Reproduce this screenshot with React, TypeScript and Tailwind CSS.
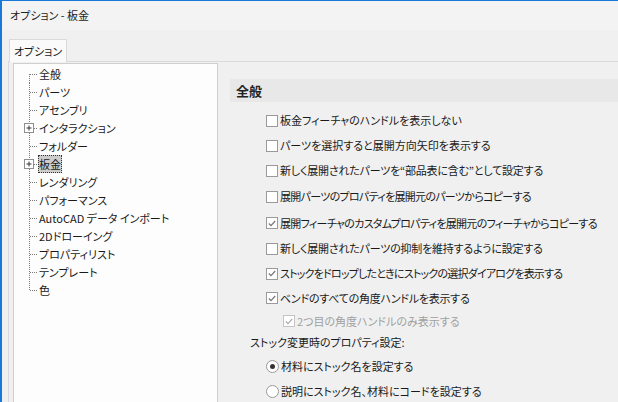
import React from "react";

const treeItems = [
  { label: "全般" },
  { label: "パーツ" },
  { label: "アセンブリ" },
  { label: "インタラクション", plus: true },
  { label: "フォルダー" },
  { label: "板金", plus: true, selected: true },
  { label: "レンダリング" },
  { label: "パフォーマンス" },
  { label: "AutoCAD データ インポート" },
  { label: "2Dドローイング" },
  { label: "プロパティリスト" },
  { label: "テンプレート" },
  { label: "色" },
];

const options = [
  { label: "板金フィーチャのハンドルを表示しない", checked: false, h: "h-[25px]", t: "" },
  { label: "パーツを選択すると展開方向矢印を表示する", checked: false, h: "h-[25px]", t: "" },
  { label: "新しく展開されたパーツを“部品表に含む”として設定する", checked: false, h: "h-[25px]", t: "tracking-[-0.2px]" },
  { label: "展開パーツのプロパティを展開元のパーツからコピーする", checked: false, h: "h-[27px]", t: "tracking-[-0.7px]" },
  { label: "展開フィーチャのカスタムプロパティを展開元のフィーチャからコピーする", checked: true, h: "h-[26px]", t: "tracking-[-0.7px]" },
  { label: "新しく展開されたパーツの抑制を維持するように設定する", checked: false, h: "h-[25px]", t: "tracking-[-0.2px]" },
  { label: "ストックをドロップしたときにストックの選択ダイアログを表示する", checked: true, h: "h-[25px]", t: "tracking-[-0.8px]" },
  { label: "ベンドのすべての角度ハンドルを表示する", checked: true, h: "h-[24px]", t: "tracking-[-0.25px]" },
];

const TreeLines = ({ first, last, plus }: { first?: boolean; last?: boolean; plus?: boolean }) => (
  <svg width="24" height="18" className="shrink-0">
    <line
      x1="15.5"
      x2="15.5"
      y1={first ? 9 : 0}
      y2={last ? 9.5 : 18}
      stroke="#7a7a7a"
      strokeDasharray="1 1"
    />
    <line x1="16" x2="24" y1="9.5" y2="9.5" stroke="#7a7a7a" strokeDasharray="1 1" />
    {plus && (
      <>
        <rect x="10.5" y="4.5" width="9" height="9" fill="#fff" stroke="#8f8f8f" />
        <line x1="12.5" x2="17.5" y1="9" y2="9" stroke="#333" />
        <line x1="15" x2="15" y1="6.5" y2="11.5" stroke="#333" />
      </>
    )}
  </svg>
);

const CheckBox = ({ checked, disabled }: { checked: boolean; disabled?: boolean }) => (
  <span
    className={`flex h-[12px] w-[12px] shrink-0 items-center justify-center border bg-white ${
      disabled ? "border-[#c4c4c4]" : "border-[#9a9a9a]"
    }`}
  >
    {checked && (
      <svg width="8" height="7" viewBox="0 0 8 7">
        <path
          d="M0.8 3.6 L3 5.6 L7.2 1"
          fill="none"
          stroke={disabled ? "#b0b0b0" : "#7a7a7a"}
          strokeWidth="1.3"
        />
      </svg>
    )}
  </span>
);

const Radio = ({ checked }: { checked: boolean }) => (
  <span className="flex h-[13px] w-[13px] shrink-0 items-center justify-center rounded-full border border-[#9a9a9a] bg-white">
    {checked && <span className="h-[5px] w-[5px] rounded-full bg-[#333]" />}
  </span>
);

export default function App() {
  return (
    <div
      className="flex h-[402px] w-[618px] flex-col overflow-hidden border-l-2 border-t border-[#1979d6] bg-[#f0f0f0] text-[11px] text-[#1a1a1a] [font-feature-settings:'palt']"
      style={{ fontFamily: '"Noto Sans CJK JP", "Noto Sans", sans-serif' }}
    >
      <div className="flex h-[29px] shrink-0 items-center bg-[#f3f3f3] pl-[8px] text-[#222]">
        オプション - 板金
      </div>
      <div className="flex h-[9px] shrink-0" />
      <div className="relative z-10 flex h-[23px] shrink-0">
        <div className="ml-[7px] flex w-[58px] items-center justify-center whitespace-nowrap border border-b-0 border-[#d9d9d9] bg-[#fafafa]">
          オプション
        </div>
      </div>
      <div className="-mt-px ml-[6px] flex min-h-0 flex-1 border-l border-t border-[#d9d9d9] bg-[#f0f0f0] pl-[4px] pt-px">
        <div className="flex w-[205px] shrink-0 flex-col border border-b-0 border-[#cfcfcf] bg-[#fdfdfd] pt-[1px]">
          {treeItems.map((it, i) => (
            <div key={it.label} className="flex h-[18px] items-center">
              <TreeLines first={i === 0} last={i === treeItems.length - 1} plus={it.plus} />
              <span
                className={`whitespace-nowrap leading-[16px] ${
                  it.selected ? "border border-dotted border-[#333] bg-[#cccccc]" : "px-px"
                }`}
              >
                {it.label}
              </span>
            </div>
          ))}
        </div>
        <div className="flex min-w-0 flex-1 flex-col pl-[12px] pt-[16px]">
          <div className="flex h-[23px] shrink-0 items-center bg-[#e8e8e8] pl-[6px] text-[13px] font-bold text-[#222]">
            全般
          </div>
          <div className="flex flex-col pt-[6px] pl-[36px]">
            {options.map((o) => (
              <div key={o.label} className={`flex ${o.h} items-center gap-[2px] whitespace-nowrap`}>
                <CheckBox checked={o.checked} />
                <span className={o.t}>{o.label}</span>
              </div>
            ))}
            <div className="flex h-[22px] items-center gap-[2px] whitespace-nowrap pl-[17px] text-[#a0a0a0]">
              <CheckBox checked disabled />
              <span>2つ目の角度ハンドルのみ表示する</span>
            </div>
            <div className="-ml-[16px] flex h-[21px] items-center whitespace-nowrap">
              ストック変更時のプロパティ設定:
            </div>
            <div className="flex h-[27px] items-center gap-[2px] whitespace-nowrap">
              <Radio checked />
              <span>材料にストック名を設定する</span>
            </div>
            <div className="flex h-[23px] items-center gap-[2px] whitespace-nowrap">
              <Radio checked={false} />
              <span>説明にストック名、材料にコードを設定する</span>
            </div>
          </div>
        </div>
      </div>
    </div>
  );
}
